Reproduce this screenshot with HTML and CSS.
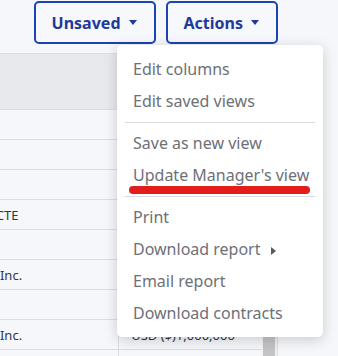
FILE: index.html
```html
<!DOCTYPE html>
<html>
<head>
  <title>Contracts</title>
  <link rel="stylesheet" href="styles.css">
</head>
<body>
  <div class="page">
    <div class="toolbar">
      <button class="btn">Unsaved <span class="caret"></span></button>
      <div class="dropdown">
        <button class="btn">Actions <span class="caret"></span></button>
        <ul class="menu">
          <li>Edit columns</li>
          <li>Edit saved views</li>
          <li class="divider"></li>
          <li>Save as new view</li>
          <li class="marked">Update Manager's view</li>
          <li class="divider"></li>
          <li>Print</li>
          <li>Download report <span class="sub-caret"></span></li>
          <li>Email report</li>
          <li>Download contracts</li>
        </ul>
      </div>
    </div>

    <div class="table">
      <div class="cols">
        <div class="row head">
          <div class="cell name"></div>
          <div class="cell value"></div>
        </div>
        <div class="row"><div class="cell name"></div><div class="cell value"></div></div>
        <div class="row"><div class="cell name"></div><div class="cell value"></div></div>
        <div class="row"><div class="cell name"></div><div class="cell value"></div></div>
        <div class="row"><div class="cell name cte"><span>Northwind CTE</span></div><div class="cell value"></div></div>
        <div class="row"><div class="cell name"></div><div class="cell value"></div></div>
        <div class="row"><div class="cell name"><span>Globex Inc.</span></div><div class="cell value"></div></div>
        <div class="row"><div class="cell name"></div><div class="cell value"></div></div>
        <div class="row"><div class="cell name"><span>Initech Inc.</span></div><div class="cell value">USD ($)1,000,000</div></div>
        <div class="row"><div class="cell name"></div><div class="cell value"></div></div>
      </div>
      <div class="scrollbar">
        <div class="thumb"></div>
      </div>
    </div>
  </div>
</body>
</html>
```

FILE: styles.css
```css
body {
  margin: 0;
  background: #f6f7fb;
  font-family: "Noto Sans", "Open Sans", sans-serif;
  overflow: hidden;
}

.page {
  width: 278px;
}

/* toolbar */
.toolbar {
  display: flex;
  justify-content: flex-end;
  gap: 10px;
  padding-top: 1px;
  margin-bottom: 9px;
}

.btn {
  display: flex;
  align-items: center;
  height: 43px;
  padding: 0 17px 0 16px;
  background: #f7f8fc;
  border: 2px solid #1a45b0;
  border-radius: 5px;
  color: #1f3a98;
  font-family: inherit;
  font-size: 16px;
  font-weight: bold;
}

.caret {
  display: inline-block;
  margin-left: 8px;
  border-top: 5px solid #1f3a98;
  border-left: 4px solid transparent;
  border-right: 4px solid transparent;
}

.dropdown {
  position: relative;
}

/* actions menu */
.menu {
  position: absolute;
  top: 44px;
  right: -45px;
  width: 206px;
  margin: 0;
  padding: 8px 0;
  list-style: none;
  background: #fff;
  border-radius: 5px;
  box-shadow: 0 3px 14px rgba(0, 0, 0, 0.18);
  z-index: 10;
}

.menu li {
  position: relative;
  padding: 0 16px;
  line-height: 32px;
  font-size: 16px;
  color: #6d7077;
  white-space: nowrap;
}

.menu li.divider {
  height: 1px;
  margin: 5px 8px 4px;
  padding: 0;
  background: #dadbdf;
}

.menu li.marked::after {
  content: "";
  position: absolute;
  left: 12px;
  top: 27px;
  width: 181px;
  height: 8px;
  border-radius: 4px;
  background: #e31c1c;
}

.sub-caret {
  display: inline-block;
  margin-left: 6px;
  border-left: 5px solid #55585e;
  border-top: 4px solid transparent;
  border-bottom: 4px solid transparent;
}

/* table */
.table {
  display: flex;
  border-top: 1px solid #dcdde2;
}

.cols {
  width: 262px;
}

.row {
  display: flex;
  height: 29px;
  border-bottom: 1px solid #dcdde1;
}

.row.head {
  height: 55px;
  background: #e8e9ed;
}

.cell {
  display: flex;
  align-items: center;
  overflow: hidden;
  white-space: nowrap;
  font-size: 13px;
  color: #33363b;
}

.cell.name {
  width: 120px;
  justify-content: flex-end;
  padding-right: 96px;
  box-sizing: border-box;
}

.cell.cte {
  padding-right: 100px;
}

.cell.value {
  width: 142px;
  padding-left: 12px;
  border-left: 1px solid #dcdde1;
}

.scrollbar {
  width: 15px;
  border-right: 1px solid #dcdde1;
  background: #f1f1f3;
  display: flex;
  flex-direction: column;
  justify-content: flex-end;
}

.thumb {
  width: 12px;
  height: 240px;
  margin-left: 1px;
  background: #c4c4c6;
}
```
